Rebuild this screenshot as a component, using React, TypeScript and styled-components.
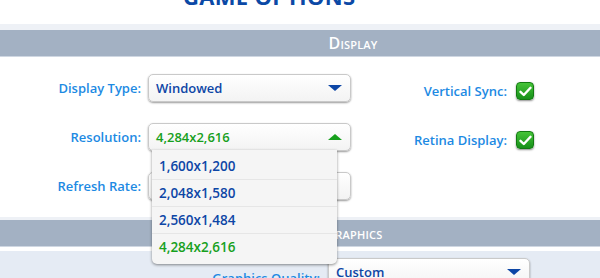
import styled, { createGlobalStyle } from 'styled-components';

const GlobalStyle = createGlobalStyle`
  html, body {
    margin: 0;
    padding: 0;
    background: #ffffff;
    overflow: hidden;
  }
  body {
    font-family: 'Open Sans', 'Noto Sans', sans-serif;
  }
`;

const Page = styled.div`
  width: 600px;
  height: 278px;
  overflow: hidden;
`;

const Title = styled.h1`
  margin: -18px 0 0;
  padding-left: 183px;
  height: 42px;
  font-size: 22px;
  line-height: 28px;
  font-weight: 700;
  letter-spacing: 0.3px;
  color: #0b49a6;
  text-transform: uppercase;
`;

const SectionHeader = styled.div<{ $band: number }>`
  border-top: ${({ $band }) => $band}px solid #eef1f6;
  border-bottom: 1px solid #cfd7e2;
  background: #a3b1c3;
  height: 26px;
  display: flex;
  align-items: center;
  justify-content: center;
  padding-left: 106px;
  color: #ffffff;
  font-size: 16px;
  font-weight: 600;
  font-variant: small-caps;
  letter-spacing: 0.2px;
`;

const DisplayBody = styled.div`
  position: relative;
  display: grid;
  grid-template-columns: 141px 203px 151px 26px;
  grid-auto-rows: 28px;
  column-gap: 7px;
  row-gap: 21px;
  align-items: center;
  padding: 17px 0 17px;
`;

const Label = styled.span`
  justify-self: end;
  font-size: 13px;
  font-weight: 600;
  color: #1d8ae3;
  white-space: nowrap;
`;

const SideLabel = styled(Label)`
  margin: 6px 2px 0 0;
`;

const SelectBox = styled.div`
  position: relative;
  height: 28px;
  box-sizing: border-box;
  display: flex;
  align-items: center;
  justify-content: space-between;
  padding: 0 8px 0 7px;
  border: 1px solid #c9c9c9;
  border-radius: 5px;
  background: linear-gradient(#ffffff, #f3f3f3);
  box-shadow: 0 1px 2px rgba(0, 0, 0, 0.4);
  font-size: 13px;
  font-weight: 600;
`;

const SelectText = styled.span<{ $green?: boolean }>`
  color: ${({ $green }) => ($green ? '#17a01d' : '#0d46a6')};
`;

const Arrow = styled.span<{ $up?: boolean; $green?: boolean }>`
  width: 0;
  height: 0;
  border-left: 7px solid transparent;
  border-right: 7px solid transparent;
  ${({ $up, $green }) =>
    $up
      ? `border-bottom: 6px solid ${$green ? '#17a01d' : '#0d46a6'};`
      : `border-top: 6px solid ${$green ? '#17a01d' : '#0d46a6'};`}
`;

const Checkbox = styled.span`
  width: 18px;
  height: 18px;
  margin-top: 6px;
  box-sizing: border-box;
  display: flex;
  align-items: center;
  justify-content: center;
  border-radius: 4px;
  border: 1px solid #137a12;
  background: linear-gradient(#45c437, #17901a);
  box-shadow: 0 1px 2px rgba(0, 0, 0, 0.45);
`;

const DropList = styled.ul`
  position: absolute;
  z-index: 2;
  left: 152px;
  top: 93px;
  width: 185px;
  margin: 0;
  padding: 2px 0 4px;
  list-style: none;
  background: #f5f5f5;
  border-radius: 0 0 5px 5px;
  box-shadow: 0 1px 3px rgba(0, 0, 0, 0.45);
`;

const DropItem = styled.li<{ $green?: boolean }>`
  height: 27px;
  box-sizing: border-box;
  display: flex;
  align-items: center;
  padding-left: 7px;
  font-size: 13.5px;
  font-weight: 600;
  color: ${({ $green }) => ($green ? '#17a01d' : '#0d46a6')};
  & + & {
    border-top: 1px solid #e6e6e6;
  }
`;

const GraphicsBody = styled.div`
  margin-top: 4px;
  background: #e5ebf4;
  height: 40px;
  display: grid;
  grid-template-columns: 320px 202px;
  column-gap: 8px;
  padding-top: 7px;
`;

const GraphicsLabel = styled(Label)`
  align-self: center;
`;

function Check() {
  return (
    <svg width="13" height="11" viewBox="0 0 13 11">
      <path
        d="M1.5 5.8 L4.8 9 L11.5 1.8"
        fill="none"
        stroke="#ffffff"
        strokeWidth="2.4"
        strokeLinecap="round"
        strokeLinejoin="round"
      />
    </svg>
  );
}

const resolutions = ['1,600x1,200', '2,048x1,580', '2,560x1,484', '4,284x2,616'];

export default function App() {
  return (
    <Page>
      <GlobalStyle />
      <Title>Game Options</Title>
      <SectionHeader $band={6}>Display</SectionHeader>
      <DisplayBody>
        <Label>Display Type:</Label>
        <SelectBox>
          <SelectText>Windowed</SelectText>
          <Arrow />
        </SelectBox>
        <SideLabel>Vertical Sync:</SideLabel>
        <Checkbox>
          <Check />
        </Checkbox>

        <Label>Resolution:</Label>
        <SelectBox>
          <SelectText $green>4,284x2,616</SelectText>
          <Arrow $up $green />
        </SelectBox>
        <SideLabel>Retina Display:</SideLabel>
        <Checkbox>
          <Check />
        </Checkbox>

        <Label>Refresh Rate:</Label>
        <SelectBox />
        <span />
        <span />

        <DropList>
          {resolutions.map((r, i) => (
            <DropItem key={r} $green={i === resolutions.length - 1}>
              {r}
            </DropItem>
          ))}
        </DropList>
      </DisplayBody>
      <SectionHeader $band={3}>Graphics</SectionHeader>
      <GraphicsBody>
        <GraphicsLabel>Graphics Quality:</GraphicsLabel>
        <SelectBox>
          <SelectText>Custom</SelectText>
          <Arrow />
        </SelectBox>
      </GraphicsBody>
    </Page>
  );
}
